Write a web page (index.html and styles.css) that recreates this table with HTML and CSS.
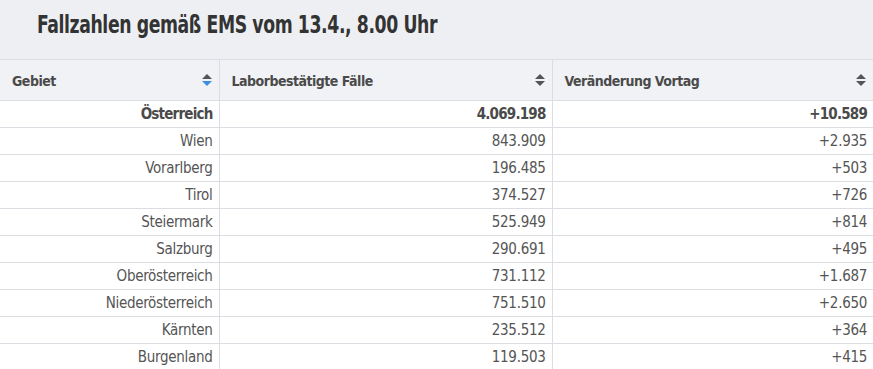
FILE: index.html
```html
<!DOCTYPE html>
<html lang="de">
<head>
<meta charset="utf-8">
<link rel="stylesheet" href="styles.css">
</head>
<body>
<div class="wrap">
  <div class="title"><span class="title-text">Fallzahlen gemäß EMS vom 13.4., 8.00 Uhr</span></div>
  <table class="tbl">
    <colgroup><col class="c1"><col class="c2"><col class="c3"></colgroup>
    <thead>
      <tr>
        <th><span>Gebiet</span><svg class="sort" viewBox="0 0 10 12"><path d="M5 0 L10 5 H0 Z" fill="#555"/><path d="M5 12 L10 7 H0 Z" fill="#3d8de0"/></svg></th>
        <th><span>Laborbestätigte Fälle</span><svg class="sort" viewBox="0 0 10 12"><path d="M5 0 L10 5 H0 Z" fill="#555"/><path d="M5 12 L10 7 H0 Z" fill="#555"/></svg></th>
        <th><span>Veränderung Vortag</span><svg class="sort" viewBox="0 0 10 12"><path d="M5 0 L10 5 H0 Z" fill="#555"/><path d="M5 12 L10 7 H0 Z" fill="#555"/></svg></th>
      </tr>
    </thead>
    <tbody>
      <tr class="total"><td>Österreich</td><td>4.069.198</td><td>+10.589</td></tr>
      <tr><td>Wien</td><td>843.909</td><td>+2.935</td></tr>
      <tr><td>Vorarlberg</td><td>196.485</td><td>+503</td></tr>
      <tr><td>Tirol</td><td>374.527</td><td>+726</td></tr>
      <tr><td>Steiermark</td><td>525.949</td><td>+814</td></tr>
      <tr><td>Salzburg</td><td>290.691</td><td>+495</td></tr>
      <tr><td>Oberösterreich</td><td>731.112</td><td>+1.687</td></tr>
      <tr><td>Niederösterreich</td><td>751.510</td><td>+2.650</td></tr>
      <tr><td>Kärnten</td><td>235.512</td><td>+364</td></tr>
      <tr><td>Burgenland</td><td>119.503</td><td>+415</td></tr>
    </tbody>
  </table>
</div>
</body>
</html>
```
FILE: styles.css
```css
html, body {
  margin: 0;
  padding: 0;
  background: #ffffff;
}
body {
  font-family: "DejaVu Sans Condensed", "DejaVu Sans", sans-serif;
  color: #555;
}
.wrap {
  width: 873px;
  overflow: hidden;
}
.title {
  background: #eeeff3;
  height: 60px;
  box-sizing: border-box;
  padding: 10px 0 0 37px;
  font-size: 24px;
  font-weight: bold;
  color: #333;
  line-height: 30px;
  border-bottom: 1px solid #dcdde3;
  white-space: nowrap;
}
.title-text {
  display: inline-block;
  letter-spacing: -0.5px;
  transform: scaleX(0.8);
  transform-origin: left center;
}
.tbl {
  border-collapse: collapse;
  width: 873px;
  table-layout: fixed;
}
.c1 { width: 219px; }
.c2 { width: 333px; }
.c3 { width: 321px; }
.tbl th {
  background: #f1f2f6;
  height: 40px;
  padding: 0 8px 0 12px;
  text-align: left;
  font-size: 14px;
  font-weight: bold;
  letter-spacing: -0.5px;
  color: #4a4a4a;
  border-left: 1px solid #dcdde3;
  border-bottom: 1px solid #dcdde3;
  position: relative;
}
.tbl th:first-child { border-left: none; }
.tbl th span { vertical-align: middle; }
.sort {
  position: absolute;
  right: 7px;
  top: 14px;
  width: 10px;
  height: 12px;
}
.tbl td {
  height: 26px;
  padding: 0 6px 0 6px;
  text-align: right;
  font-size: 15px;
  letter-spacing: -0.3px;
  color: #555;
  border-left: 1px solid #dcdde3;
  border-bottom: 1px solid #dcdde3;
}
.tbl td:first-child { border-left: none; }
.tbl tr.total td { font-weight: bold; color: #4a4a4a; letter-spacing: -0.8px; }
```
